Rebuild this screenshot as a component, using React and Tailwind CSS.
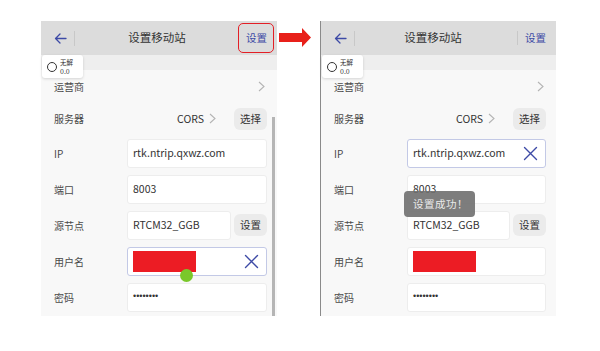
import React from 'react';

const font = { fontFamily: '"Noto Sans CJK SC", "Liberation Sans", sans-serif' };

const Chevron = ({ className = '' }) => (
    <svg width="7" height="11" viewBox="0 0 7 11" className={className}>
        <polyline points="1,1 6,5.5 1,10" fill="none" stroke="#b4b4b4" strokeWidth="1.1" />
    </svg>
);

const ClearIcon = () => (
    <svg width="15" height="15" viewBox="0 0 15 15">
        <path d="M1.5 1.5 L13.5 13.5 M13.5 1.5 L1.5 13.5" stroke="#3d4aa6" strokeWidth="1.4" strokeLinecap="round" />
    </svg>
);

const BackIcon = () => (
    <svg width="13" height="11" viewBox="0 0 13 11">
        <path d="M12 5.5 H1.5 M6 1 L1.5 5.5 L6 10" fill="none" stroke="#3d4aa6" strokeWidth="1.3" strokeLinecap="round" strokeLinejoin="round" />
    </svg>
);

const Label = ({ children }) => (
    <span className="w-[86px] pl-[13px] text-[10px] text-[#4a4a4a] shrink-0">{children}</span>
);

const Field = ({ children, focused, clear, className = '' }) => (
    <div
        className={`h-[29px] flex items-center justify-between pl-[5px] pr-[7px] bg-white rounded-[3px] border ${focused ? 'border-[#c3c9e6]' : 'border-[#ededed]'
            } ${className}`}
    >
        <div className="flex items-center text-[10.5px] text-[#333]">{children}</div>
        {clear && <ClearIcon />}
    </div>
);

const SmallButton = ({ children }) => (
    <div className="w-[33px] h-[22px] ml-[3px] flex items-center justify-center rounded-[6px] bg-[#ebebeb] text-[10.5px] text-[#333]">
        {children}
    </div>
);

const Redacted = () => <div className="w-[63px] h-[21px] bg-[#ec1c24]" />;

const Phone = ({ side }) => {
    const left = side === 'left';
    return (
        <div className={`relative w-[236px] h-[295px] flex flex-col bg-[#f8f8f8] ${left ? '' : 'border-l border-[#8a8a8a]'}`}>
            {/* Header */}
            <div className="relative h-[34px] flex items-center bg-[#dcdcdc] shrink-0">
                <div className="w-[28px] flex justify-end pr-[2px]">
                    <BackIcon />
                </div>
                <div className="w-px h-[15px] bg-[#c8c8c8] ml-[5px]" />
                <div className="flex-1 text-center text-[11.5px] text-[#333] pr-[6px]">设置移动站</div>
                {!left && <div className="w-px h-[14px] bg-[#c8c8c8] mr-[6px]" />}
                <div className="w-[32px] text-[10.5px] text-[#3d4aa6] pr-[10px] text-right shrink-0">设置</div>
                {left && (
                    <div className="absolute right-[3px] top-[2px] w-[36px] h-[30px] rounded-[5px] border-[1.5px] border-[#e31f26]" />
                )}
            </div>

            {/* Status badge */}
            <div className="absolute left-[1px] top-[34px] w-[41px] h-[23px] bg-white rounded-[3px] shadow-[0_1px_3px_rgba(0,0,0,0.15)] flex items-center pl-[5px] gap-[3px] z-10">
                <div className="w-[10px] h-[10px] rounded-full border border-[#333]" />
                <div className="flex flex-col leading-[9px]">
                    <span className="text-[6.5px] text-[#333]">无解</span>
                    <span className="text-[7px] text-[#333]">0.0</span>
                </div>
            </div>

            <div className="h-[15px] bg-[#eeeeee] shrink-0" />

            {/* Rows */}
            <div className="h-[32px] flex items-center pr-[12px]">
                <Label>运营商</Label>
                <div className="flex-1" />
                <Chevron />
            </div>
            <div className="h-[33px] flex items-center pr-[10px]">
                <Label>服务器</Label>
                <div className="flex-1 flex items-center justify-end gap-[5px] pr-[15px] text-[10.5px] text-[#333]">
                    CORS
                    <Chevron />
                </div>
                <SmallButton>选择</SmallButton>
            </div>
            <div className="h-[36px] flex items-center pr-[10px]">
                <Label>IP</Label>
                <Field className="flex-1" focused={!left} clear={!left}>rtk.ntrip.qxwz.com</Field>
            </div>
            <div className="h-[36px] flex items-center pr-[10px]">
                <Label>端口</Label>
                <Field className="flex-1">8003</Field>
            </div>
            <div className="h-[36px] flex items-center pr-[10px]">
                <Label>源节点</Label>
                <Field className="flex-1">RTCM32_GGB</Field>
                <SmallButton>设置</SmallButton>
            </div>
            <div className="h-[36px] flex items-center pr-[10px]">
                <Label>用户名</Label>
                <Field className="flex-1 pl-[2px]" focused={left} clear={left}>
                    <Redacted />
                </Field>
            </div>
            <div className="h-[36px] flex items-center pr-[10px]">
                <Label>密码</Label>
                <Field className="flex-1">
                    <span className="text-[9px] text-[#333] font-['Liberation_Sans',sans-serif]">••••••••</span>
                </Field>
            </div>

            {left && (
                <>
                    {/* scrollbar */}
                    <div className="absolute right-[2px] top-[96px] bottom-0 w-[3px] bg-[#b5b5b5]" />
                    {/* touch point */}
                    <div className="absolute left-[139px] top-[248px] w-[13px] h-[13px] rounded-full bg-[#7ac82a]" />
                </>
            )}
            {!left && (
                <div className="absolute left-[83px] top-[170px] w-[71px] h-[26px] rounded-[4px] bg-[#6f6f6f]/90 flex items-center pl-[9px] text-[10.5px] text-[#eaeaea] tracking-[0.5px]">
                    设置成功！
                </div>
            )}
        </div>
    );
};

export default function App() {
    return (
        <div className="w-[600px] h-[351px] bg-white flex items-start pl-[41px] pt-[21px]" style={font}>
            <Phone side="left" />
            <div className="w-[43px] pt-[7px] flex shrink-0">
                <svg width="43" height="20" viewBox="0 0 43 20">
                    <path d="M2 5 H25 V0 L34 9.5 L25 19 V14 H2 Z" fill="#e8201a" />
                </svg>
            </div>
            <Phone side="right" />
        </div>
    );
}
